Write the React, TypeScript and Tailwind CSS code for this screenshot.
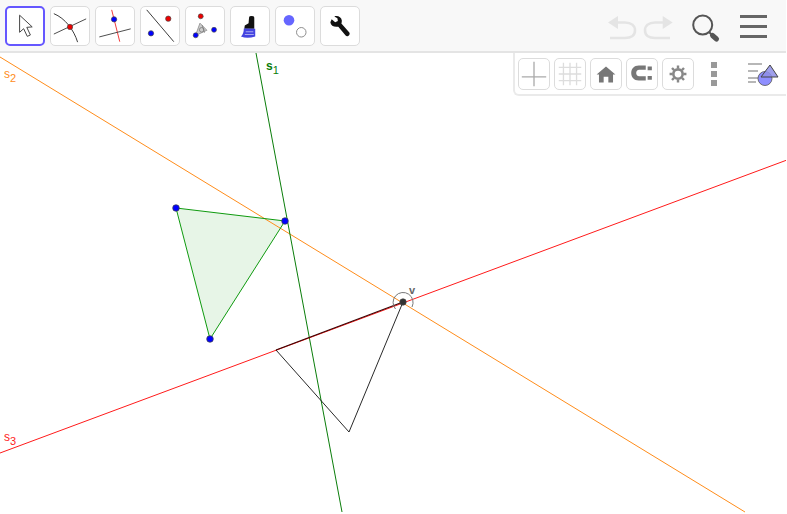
import React from "react";

const P = ({ x, y, c = "#0000ff", r = 3 }: { x: number; y: number; c?: string; r?: number }) => (
  <circle cx={x} cy={y} r={r} fill={c} stroke="#444" strokeWidth={0.7} />
);

const tools: React.ReactNode[] = [
  <path key="a" d="M14 8 L14 27 L18.5 23 L22.5 31.5 L26 30 L22 21.5 L28 21 Z" fill="#fff" stroke="#444" strokeWidth={1.1} strokeLinejoin="round" />,
  <g key="b" fill="none">
    <path d="M3 7 C 15 12, 24 24, 28 37" stroke="#333" strokeWidth={1} />
    <path d="M3 28.5 L37 12.5" stroke="#444" strokeWidth={1} />
    <P x={20} y={21} c="#ee0000" r={2.8} />
  </g>,
  <g key="c" fill="none">
    <path d="M16.5 3 L25 36.5" stroke="#f03030" strokeWidth={1} />
    <path d="M3.5 31.5 L36.5 23" stroke="#444" strokeWidth={1} />
    <P x={19} y={13} r={2.8} />
  </g>,
  <g key="d" fill="none">
    <path d="M6 3 L34.5 36.5" stroke="#333" strokeWidth={1} />
    <P x={28.7} y={12.3} c="#ee0000" r={2.8} />
    <P x={10.5} y={27.7} r={2.8} />
  </g>,
  <g key="e" fill="none">
    <path d="M10 30 L14.7 17 L22 24.5 Z" fill="#ccc" stroke="#999" strokeWidth={1} />
    <path d="M17 19 L19.5 27" stroke="#888" strokeWidth={1} />
    <circle cx={16.5} cy={24} r={2.4} stroke="#777" strokeWidth={0.8} />
    <P x={15.5} y={9.8} c="#ee0000" r={2.6} />
    <P x={10.2} y={29.8} r={2.6} />
    <P x={29.5} y={24} r={2.6} />
  </g>,
  <g key="f">
    <path d="M19 11 Q19 9.5 21.5 9.5 Q24.5 9.5 24.5 11 L24.5 23 L14 23 L14.5 19.5 L18.5 17 Z" fill="#111" />
    <path d="M13.5 22.5 L25.5 23 L25.5 31 Q17 33.5 10.5 31 Q13.5 28 13.5 22.5 Z" fill="#4444e0" />
    <path d="M15.5 26 L23.5 26 M14.5 29 L24 29" stroke="#a8a8f0" strokeWidth={1.1} />
  </g>,
  <g key="g">
    <circle cx={13.7} cy={14} r={5.6} fill="#6666ff" />
    <circle cx={26.6} cy={26.6} r={5} fill="#fff" stroke="#888" strokeWidth={1} />
  </g>,
  <path key="h" transform="translate(1 3) scale(0.93)" d="M11 10.5 L15 14 L18 12.5 L17.5 9.5 L14 7.5 C17.5 6 22 8 22.5 12 C22.5 13.5 22.3 14.5 22 15.5 L31 25.5 C32 27 31 29 29.5 29.5 C28.5 30 27.5 29.7 26.8 29 L18.5 19 C14 20 10 18 9.5 14 Z" fill="#111" />,
];

const Btn = ({ children, sel }: { children: React.ReactNode; sel?: boolean }) => (
  <div className={sel ? "w-10 h-10 rounded-[5px] border-2 border-[#6557ff] bg-white box-border" : "w-10 h-10 rounded-[5px] border border-[#dcdcdc] bg-white box-border"}>
    <svg viewBox="0 0 40 40" className={sel ? "w-9 h-9" : "w-[38px] h-[38px]"}>{children}</svg>
  </div>
);

const Small = ({ children }: { children: React.ReactNode }) => (
  <div className="w-8 h-8 rounded-[5px] border border-[#dcdcdc] bg-white box-border shrink-0">
    <svg viewBox="0 0 32 32" className="w-full h-full">{children}</svg>
  </div>
);

const Sub = ({ x, y, c, n, bold }: { x: number; y: number; c: string; n: string; bold?: boolean }) => (
  <text x={x} y={y} fontSize={12} fontWeight={bold ? 700 : 400} fill={c} fontFamily="Liberation Sans">
    s<tspan dy={4} fontSize={11} fontWeight={400}>{n}</tspan>
  </text>
);

export default function App() {
  return (
    <div className="relative w-[787px] h-[514px] bg-white overflow-hidden font-['Liberation_Sans',sans-serif]">
      <header className="w-[786px] h-[53px] bg-[#f8f8f8] border-b-2 border-[#e4e4e4] box-border flex items-center justify-between pl-[5px] pr-[19px]">
        <div className="flex gap-[5px]">
          {tools.map((t, i) => (
            <Btn key={i} sel={i === 0}>{t}</Btn>
          ))}
        </div>
        <div className="flex items-center mt-[1px]">
          <svg width="136" height="40" viewBox="0 0 136 40" fill="none">
            <g stroke="#e4e4e4" strokeWidth={2.6}>
              <path d="M13 16.5 L21 16.5 C27.5 16.5 31 20 31 24.5 C31 29 27.5 32 21 32 L6 32" />
              <path d="M59.5 16.5 L51 16.5 C44.5 16.5 41 20 41 24.5 C41 29 44.5 32 51 32 L66 32" />
            </g>
            <path d="M14 10 L14 23 L4 16.5 Z" fill="#e4e4e4" />
            <path d="M58.7 10 L58.7 23 L68.7 16.5 Z" fill="#e4e4e4" />
            <circle cx="98.7" cy="19" r="9.5" stroke="#555" strokeWidth={2} />
            <path d="M105 26 L109 30" stroke="#555" strokeWidth={2} />
            <path d="M108.5 29.5 L112.5 33" stroke="#555" strokeWidth={5} strokeLinecap="round" />
          </svg>
          <div className="w-[27px] flex flex-col gap-[7px]">
            <div className="h-[3px] bg-[#666]" />
            <div className="h-[3px] bg-[#666]" />
            <div className="h-[3px] bg-[#666]" />
          </div>
        </div>
      </header>

      <svg viewBox="0 53 786 461" className="block w-[786px] h-[461px]">
        <path d="M176 208 L285 221 L210 339 Z" fill="#0f9a0f" fillOpacity={0.1} stroke="none" />
        <path d="M0 57 L745 512" stroke="#ff8c1a" strokeWidth={1} fill="none" />
        <path d="M256 53 L342 512" stroke="#0a7d0a" strokeWidth={1} fill="none" />
        <path d="M0 453 L787 160" stroke="#ff1a1a" strokeWidth={1} fill="none" />
        <path d="M176 208 L285 221 L210 339 Z" stroke="#0f9a0f" strokeWidth={1} fill="none" />
        <path d="M276 350 L349 432 L403 302" stroke="#111" strokeWidth={0.9} fill="none" />
        <path d="M276 350 L403 302" stroke="#3a0505" strokeWidth={1.2} fill="none" />
        <path d="M395.5 309 A10 10 0 1 1 412 307" stroke="#777" strokeWidth={1} fill="none" />
        <P x={176} y={208} r={3.3} />
        <P x={285} y={221} r={3.3} />
        <P x={210} y={339} r={3.3} />
        <P x={403} y={302} c="#333" r={3.2} />
        <Sub x={4} y={78} c="#ff8c1a" n="2" />
        <Sub x={266} y={70} c="#0a7d0a" n="1" bold />
        <Sub x={4} y={441} c="#ff1a1a" n="3" />
        <text x={409} y={294} fontSize={11} fontWeight={700} fill="#666" fontFamily="Liberation Sans">v</text>
      </svg>

      <div className="absolute right-[1px] top-[53px] w-[273px] h-[43px] bg-white border-l-2 border-b-2 border-[#eaeaea] rounded-bl-[6px] box-border flex items-center pl-[3px] gap-1">
        <Small>
          <path d="M16 3 V29 M3 19 H29" stroke="#aaa" strokeWidth={1.4} fill="none" />
        </Small>
        <Small>
          <path d="M9 4 V28 M16 4 V28 M23 4 V28 M4 9 H28 M4 16 H28 M4 23 H28" stroke="#ddd" strokeWidth={1.4} fill="none" />
        </Small>
        <Small>
          <path d="M16 8 L26 16.5 L23.5 16.5 L23.5 25 L18.5 25 L18.5 19 L13.5 19 L13.5 25 L8.5 25 L8.5 16.5 L6 16.5 Z" fill="#777" />
        </Small>
        <Small>
          <path d="M20 7 H12.5 C7.5 7 4.5 10.5 4.5 15 C4.5 19.5 7.5 23 12.5 23 H20 V18.5 H13 C11 18.5 9.8 17 9.8 15 C9.8 13 11 11.5 13 11.5 H20 Z" fill="#777" />
          <path d="M22 8 H26.5 V12 H22 Z M22 18 H26.5 V22 H22 Z" fill="#777" />
        </Small>
        <Small>
          <g stroke="#888" fill="none">
            <circle cx="16" cy="16" r="5" strokeWidth={2.8} />
            <path strokeWidth={2.6} d="M16 7 V10 M16 22 V25 M7 16 H10 M22 16 H25 M9.6 9.6 L11.8 11.8 M20.2 20.2 L22.4 22.4 M9.6 22.4 L11.8 20.2 M20.2 11.8 L22.4 9.6" />
          </g>
        </Small>
        <div className="w-[6px] flex flex-col gap-[3px] ml-[13px]">
          <div className="h-[6px] bg-[#999]" />
          <div className="h-[6px] bg-[#999]" />
          <div className="h-[6px] bg-[#999]" />
        </div>
        <svg width="34" height="28" viewBox="0 0 34 28" className="ml-[27px]">
          <path d="M0 4 H14 M0 11 H10 M0 18 H10 M0 22 H8" stroke="#a0a0a0" strokeWidth={1.4} />
          <circle cx="17" cy="18.5" r="7" fill="#8f8fff" stroke="#555" strokeWidth={0.8} />
          <path d="M22 5 L30 17 L13 17 Z" fill="#8f8fe8" fillOpacity={0.85} stroke="#444" strokeWidth={1} />
        </svg>
      </div>
    </div>
  );
}
